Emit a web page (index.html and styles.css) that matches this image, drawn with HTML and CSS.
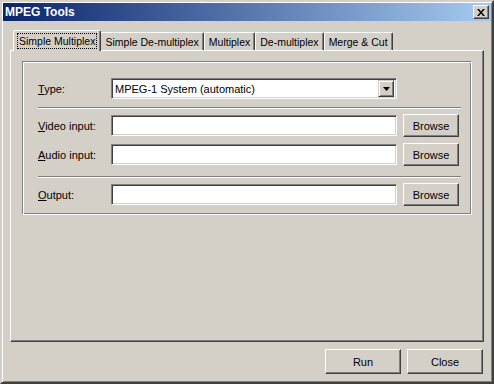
FILE: index.html
```html
<!DOCTYPE html>
<html lang="en">
<head>
    <meta charset="UTF-8">
    <title>MPEG Tools</title>
    <link rel="stylesheet" href="styles.css">
</head>
<body>
    <div class="window">
        <!-- Title bar -->
        <div class="titlebar">
            <span class="title">MPEG Tools</span>
            <button class="title-close" aria-label="Close">
                <svg width="8" height="7" viewBox="0 0 8 7">
                    <path d="M0 0h2l2 2.5L6 0h2L5 3.5 8 7H6L4 4.5 2 7H0l3-3.5z" fill="#000"/>
                </svg>
            </button>
        </div>

        <div class="client">
            <!-- Tabs -->
            <div class="tabs">
                <div class="tab active"><span class="focus">Simple Multiplex</span></div>
                <div class="tab">Simple De-multiplex</div>
                <div class="tab">Multiplex</div>
                <div class="tab">De-multiplex</div>
                <div class="tab">Merge &amp; Cut</div>
            </div>

            <div class="panel">
                <div class="group">
                    <div class="row">
                        <span class="label"><u>T</u>ype:</span>
                        <div class="combo">
                            <span class="combo-text">MPEG-1 System (automatic)</span>
                            <span class="combo-btn">
                                <svg width="7" height="4" viewBox="0 0 7 4"><path d="M0 0h7L3.5 4z" fill="#000"/></svg>
                            </span>
                        </div>
                    </div>
                    <div class="sep"></div>
                    <div class="row">
                        <span class="label"><u>V</u>ideo input:</span>
                        <div class="field"></div>
                        <button class="btn browse">Browse</button>
                    </div>
                    <div class="row gap">
                        <span class="label"><u>A</u>udio input:</span>
                        <div class="field"></div>
                        <button class="btn browse">Browse</button>
                    </div>
                    <div class="sep wide"></div>
                    <div class="row">
                        <span class="label"><u>O</u>utput:</span>
                        <div class="field"></div>
                        <button class="btn browse">Browse</button>
                    </div>
                </div>
            </div>

            <div class="footer">
                <button class="btn action">Run</button>
                <button class="btn action">Close</button>
            </div>
        </div>
    </div>
</body>
</html>
```

FILE: styles.css
```css
/* Reset */
* {
    margin: 0;
    padding: 0;
    box-sizing: border-box;
}

body {
    font-family: 'Liberation Sans', Arial, sans-serif;
    font-size: 11px;
    color: #000;
    background: #d4d0c8;
}

button {
    font: inherit;
    color: inherit;
    background: #d4d0c8;
}

/* Classic window frame */
.window {
    width: 494px;
    height: 384px;
    display: flex;
    flex-direction: column;
    padding: 1px;
    background: #d4d0c8;
    border: 2px solid;
    border-color: #d4d0c8 #404040 #404040 #d4d0c8;
    box-shadow: inset 1px 1px #fff, inset -1px -1px #808080;
}

.titlebar {
    height: 18px;
    display: flex;
    align-items: center;
    justify-content: space-between;
    padding: 0 2px 0 2px;
    background: linear-gradient(to right, #0a246a, #a6caf0);
}

.title {
    color: #fff;
    font-weight: bold;
    font-size: 12px;
}

.title-close {
    width: 16px;
    height: 14px;
    display: flex;
    align-items: center;
    justify-content: center;
    border: 1px solid;
    border-color: #fff #404040 #404040 #fff;
    box-shadow: inset -1px -1px #808080;
}

.client {
    flex: 1;
    display: flex;
    flex-direction: column;
    padding: 9px 7px 7px 7px;
}

/* Tabs */
.tabs {
    display: flex;
    align-items: flex-end;
    height: 20px;
    padding-left: 3px;
    position: relative;
    z-index: 1;
    font-size: 10.5px;
}

.tab {
    height: 18px;
    padding: 0 4px;
    display: flex;
    align-items: center;
    border: 1px solid;
    border-bottom: none;
    border-color: #fff #404040 transparent #fff;
    box-shadow: inset -1px 0 #808080;
    border-radius: 2px 2px 0 0;
    white-space: nowrap;
}

.tab.active {
    height: 21px;
    margin: 0 -1px -1px 0;
    padding: 0 5px 1px 5px;
    background: #d4d0c8;
    position: relative;
}

.focus {
    outline: 1px dotted #000;
    outline-offset: 1px;
}

/* Panel */
.panel {
    flex: 1;
    padding: 10px 11px 0 11px;
    border: 1px solid;
    border-color: #fff #404040 #404040 #fff;
    box-shadow: inset -1px -1px #808080;
}

.group {
    padding: 15px 10px 8px 15px;
    border: 1px solid;
    border-color: #808080 #fff #fff #808080;
    box-shadow: inset 1px 1px #fff, inset -1px -1px #808080;
}

.row {
    display: flex;
    align-items: center;
    height: 23px;
}

.row.gap {
    margin-top: 6px;
}

.label {
    width: 73px;
    flex-shrink: 0;
}

.sep {
    height: 2px;
    margin: 7px 0 5px 0;
    border-top: 1px solid #808080;
    border-bottom: 1px solid #fff;
}

.sep.wide {
    margin-top: 10px;
}

/* Sunken fields */
.field,
.combo {
    width: 286px;
    height: 21px;
    background: #fff;
    border: 1px solid;
    border-color: #808080 #fff #fff #808080;
    box-shadow: inset 1px 1px #404040, inset -1px -1px #d4d0c8;
}

.combo {
    display: flex;
    align-items: center;
    justify-content: space-between;
    padding: 2px;
}

.combo-text {
    padding-left: 1px;
}

.combo-btn {
    width: 16px;
    height: 17px;
    display: flex;
    align-items: center;
    justify-content: center;
    background: #d4d0c8;
    border: 1px solid;
    border-color: #d4d0c8 #404040 #404040 #d4d0c8;
    box-shadow: inset 1px 1px #fff, inset -1px -1px #808080;
}

/* Raised buttons */
.btn {
    border: 1px solid;
    border-color: #fff #404040 #404040 #fff;
    box-shadow: inset -1px -1px #808080;
    cursor: pointer;
}

.browse {
    width: 56px;
    height: 23px;
    margin-left: 6px;
}

.footer {
    display: flex;
    justify-content: flex-end;
    gap: 6px;
    margin-top: 7px;
    padding-right: 1px;
}

.action {
    width: 76px;
    height: 25px;
}
```
